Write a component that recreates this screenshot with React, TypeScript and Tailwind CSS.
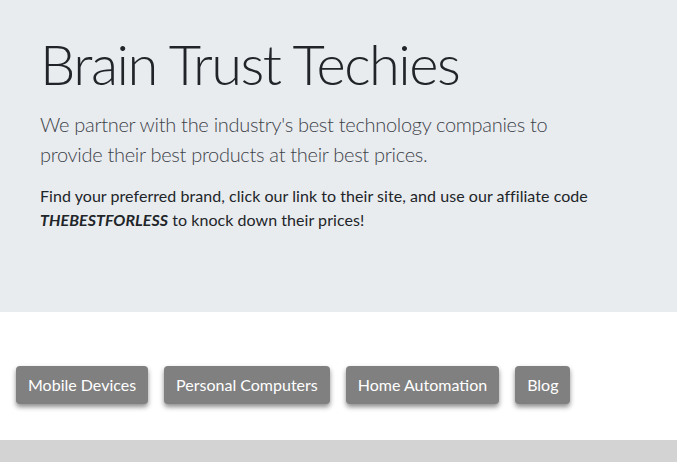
export default function App() {
  const links = ["Mobile Devices", "Personal Computers", "Home Automation", "Blog"];

  return (
    <div className="min-h-[462px] bg-white text-[#212529] font-['Lato',sans-serif]">
      <div className="bg-[#e9ecef] pl-10 pr-8 pt-[30px] h-[312px]">
        <h1 className="text-[56px] leading-[1.2] font-light tracking-[-1.5px]">Brain Trust Techies</h1>
        <p className="mt-3 text-[20px] leading-[30px] font-light text-[#3d434a] tracking-[-0.3px] max-w-[530px]">
          We partner with the industry's best technology companies to provide their best products at
          their best prices.
        </p>
        <p className="mt-[15px] text-[16px] leading-6 tracking-[0.05px] max-w-[570px]">
          Find your preferred brand, click our link to their site, and use our affiliate code{" "}
          <b className="italic font-bold">THEBESTFORLESS</b> to knock down their prices!
        </p>
      </div>

      <nav className="flex gap-4 px-4 pt-[54px] pb-9">
        {links.map((l) => (
          <a
            key={l}
            href="#"
            className="h-[38px] px-3 flex items-center rounded bg-[#808080] text-white text-[16px] shadow-[0_3px_5px_rgba(0,0,0,0.45)]"
          >
            {l}
          </a>
        ))}
      </nav>

      <div className="h-[22px] bg-[#d3d3d3]" />
    </div>
  );
}
